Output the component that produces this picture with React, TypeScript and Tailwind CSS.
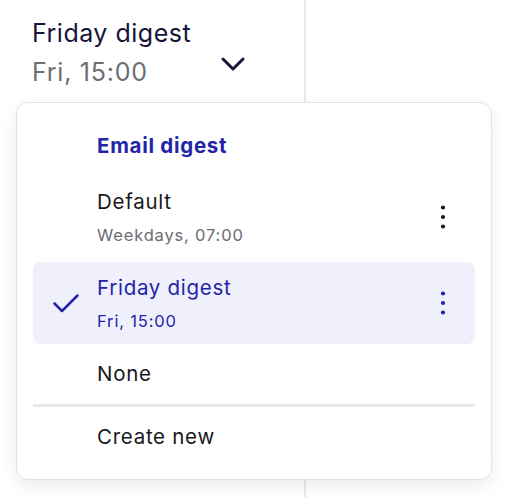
import type { ReactNode } from 'react'

const font = { fontFamily: 'Inter, "Noto Sans", sans-serif' }

function Kebab({ className }: { className: string }) {
  return (
    <svg width="24" height="24" viewBox="0 0 24 24" className={className} fill="currentColor">
      <circle cx="12" cy="2.5" r="2.1" />
      <circle cx="12" cy="12" r="2.1" />
      <circle cx="12" cy="21.5" r="2.1" />
    </svg>
  )
}

function Check() {
  return (
    <svg width="26" height="19" viewBox="0 0 26 19" fill="none" className="text-[#2424a8]">
      <polyline
        points="1.5,9.5 9,17 24.5,1.5"
        stroke="currentColor"
        strokeWidth="2.5"
        strokeLinecap="round"
        strokeLinejoin="round"
      />
    </svg>
  )
}

type RowProps = {
  title: string
  sub?: string
  selected?: boolean
  menu?: boolean
  className?: string
}

function Row({ title, sub, selected, menu, className = '' }: RowProps) {
  const lead: ReactNode = selected ? <Check /> : null
  return (
    <div
      className={`flex items-center rounded-lg pr-5 ${selected ? 'bg-[#eff0fb]' : ''} ${
        sub ? 'h-[82px]' : 'h-[52px]'
      } ${className}`}
    >
      <div className="flex w-[64px] shrink-0 justify-end pr-[18px]">{lead}</div>
      <div className="flex-1">
        <div
          className={`text-[20.5px] leading-7 tracking-[0.035em] ${
            selected ? 'text-[#2424a8]' : 'text-[#17171c]'
          }`}
        >
          {title}
        </div>
        {sub && (
          <div
            className={`mt-[7px] text-[16.5px] leading-6 tracking-[0.05em] ${
              selected ? 'text-[#2424a8]' : 'text-[#6b6b74]'
            }`}
          >
            {sub}
          </div>
        )}
      </div>
      {menu && <Kebab className={`ml-2 ${selected ? 'text-[#2424a8]' : 'text-[#17171c]'}`} />}
    </div>
  )
}

export default function App() {
  return (
    <div className="relative h-[497px] w-[508px] overflow-hidden bg-white" style={font}>
      <div className="h-full w-[306px] border-r-2 border-[#e9e9ec]">
        <div className="flex items-center pl-8 pt-[17px]">
          <div>
            <div className="text-[25px] leading-8 tracking-[0.02em] text-[#15153a]">
              Friday digest
            </div>
            <div className="mt-[7px] text-[25px] leading-8 tracking-[0.03em] text-[#6e6e76]">
              Fri, 15:00
            </div>
          </div>
          <svg
            width="24"
            height="16"
            viewBox="0 0 24 16"
            fill="none"
            className="ml-[30px] mt-[22px] text-[#15153a]"
          >
            <polyline
              points="2,3 12,13 22,3"
              stroke="currentColor"
              strokeWidth="3"
              strokeLinecap="round"
              strokeLinejoin="round"
            />
          </svg>
        </div>
      </div>

      <div className="absolute left-4 top-[102px] w-[476px] rounded-xl border border-[#e3e3e6] bg-white px-4 pb-4 pt-[13px] shadow-[0_6px_18px_rgba(0,0,0,0.08)]">
        <div className="flex h-[60px] items-center pl-[64px] text-[20.5px] font-bold leading-7 tracking-[0.035em] text-[#2424a8]">
          Email digest
        </div>
        <Row title="Default" sub="Weekdays, 07:00" menu />
        <Row title="Friday digest" sub="Fri, 15:00" menu selected className="mt-1" />
        <Row title="None" className="mt-1" />
        <div className="mt-1 h-[3px] bg-[#e8e8ea]" />
        <Row title="Create new" className="mt-1" />
      </div>
    </div>
  )
}
